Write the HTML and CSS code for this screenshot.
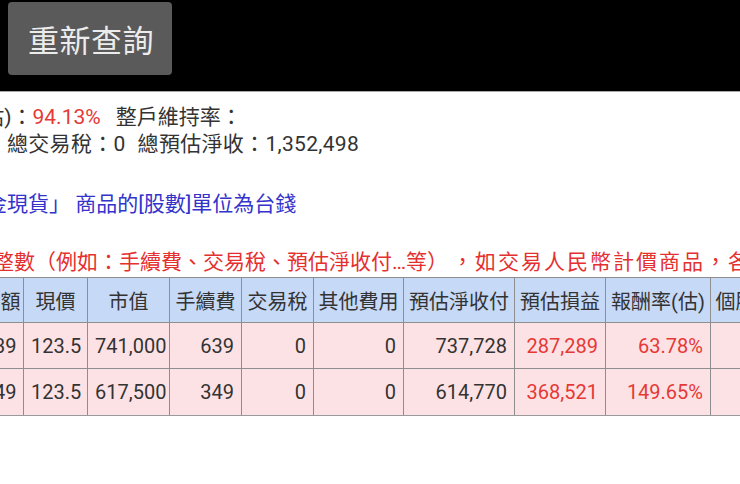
FILE: index.html
```html
<!DOCTYPE html>
<html lang="zh-Hant">
<head>
<meta charset="utf-8">
<title>查詢</title>
<link rel="stylesheet" href="styles.css">
</head>
<body>
<header class="topbar">
  <button class="requery" type="button">重新查詢</button>
</header>
<main class="content">
  <p class="line line1"><span class="clip-lead">(估)：</span><span class="red">94.13%</span><span class="gap-a">整戶維持率：</span></p>
  <p class="line line2">總交易稅：0<span class="gap-b">總預估淨收：1,352,498</span></p>
  <p class="line note-blue">金現貨」 商品的[股數]單位為台錢</p>
  <p class="line note-red">整數（例如：手續費、交易稅、預估淨收付…等）<span class="tail">，如交易人民幣計價商品，各幣別</span></p>
  <table class="grid">
    <colgroup>
      <col class="c-cost">
      <col class="c-price">
      <col class="c-value">
      <col class="c-fee">
      <col class="c-tax">
      <col class="c-other">
      <col class="c-net">
      <col class="c-pl">
      <col class="c-rate">
      <col class="c-last">
    </colgroup>
    <thead>
      <tr>
        <th>付出金額</th>
        <th>現價</th>
        <th>市值</th>
        <th>手續費</th>
        <th>交易稅</th>
        <th>其他費用</th>
        <th>預估淨收付</th>
        <th>預估損益</th>
        <th>報酬率(估)</th>
        <th>個股比重</th>
      </tr>
    </thead>
    <tbody>
      <tr>
        <td>450,439</td>
        <td>123.5</td>
        <td>741,000</td>
        <td>639</td>
        <td>0</td>
        <td>0</td>
        <td>737,728</td>
        <td class="red">287,289</td>
        <td class="red">63.78%</td>
        <td></td>
      </tr>
      <tr>
        <td>246,249</td>
        <td>123.5</td>
        <td>617,500</td>
        <td>349</td>
        <td>0</td>
        <td>0</td>
        <td>614,770</td>
        <td class="red">368,521</td>
        <td class="red">149.65%</td>
        <td></td>
      </tr>
    </tbody>
  </table>
</main>
</body>
</html>
```

FILE: styles.css
```css
html, body {
  margin: 0;
  padding: 0;
  background: #ffffff;
}

body {
  width: 740px;
  height: 484px;
  overflow: hidden;
  font-family: "Roboto", "Noto Sans CJK TC", sans-serif;
  color: #333333;
  text-spacing-trim: space-all;
}

.topbar {
  height: 89px;
  background: #000000;
  border-bottom: 1px solid #a8a8a8;
  display: flex;
  align-items: flex-start;
  padding: 2px 8px 0;
}

.requery {
  width: 164px;
  height: 73px;
  background: #5a5a5a;
  color: #ececec;
  border: none;
  border-radius: 4px;
  font-family: "Roboto", "Noto Sans CJK TC", sans-serif;
  font-size: 31px;
  padding: 0 0 0 2px;
  letter-spacing: 0.5px;
}

.content {
  overflow: hidden;
}

.line {
  margin: 0;
  font-size: 21px;
  line-height: 27px;
  white-space: nowrap;
}

.line1 {
  margin-top: 12px;
  margin-left: -24px;
}

.line2 {
  margin-left: 7px;
  letter-spacing: 0.3px;
}

.gap-a {
  margin-left: 15px;
}

.gap-b {
  margin-left: 12px;
}

.red {
  color: #e53935;
}

.note-blue {
  margin-top: 33px;
  margin-left: -14px;
  color: #3333cc;
}

.note-red {
  margin-top: 31px;
  margin-left: -7px;
  color: #e53030;
}

.note-red .tail {
  margin-left: 4px;
  letter-spacing: 2px;
}

.grid {
  margin-top: 1px;
  margin-left: -63px;
  border-collapse: collapse;
  table-layout: fixed;
  width: 863px;
  font-size: 20px;
}

.c-cost { width: 86px; }
.c-price { width: 64px; }
.c-value { width: 82px; }
.c-fee { width: 72px; }
.c-tax { width: 72px; }
.c-other { width: 90px; }
.c-net { width: 111px; }
.c-pl { width: 91px; }
.c-rate { width: 105px; }
.c-last { width: 90px; }

.grid th,
.grid td {
  border: 1px solid #8e8e8e;
  white-space: nowrap;
  overflow: hidden;
}

.grid th {
  height: 44px;
  padding: 0;
  background: #c6d9f6;
  font-weight: normal;
  text-align: center;
  color: #333333;
}

.grid td {
  height: 45px;
  padding: 0 7px;
  background: #fde2e5;
  text-align: right;
}

.grid tbody tr:last-child td {
  height: 46px;
  border-bottom-color: #9a9a9a;
}

.grid td.red {
  color: #e53935;
}
```
